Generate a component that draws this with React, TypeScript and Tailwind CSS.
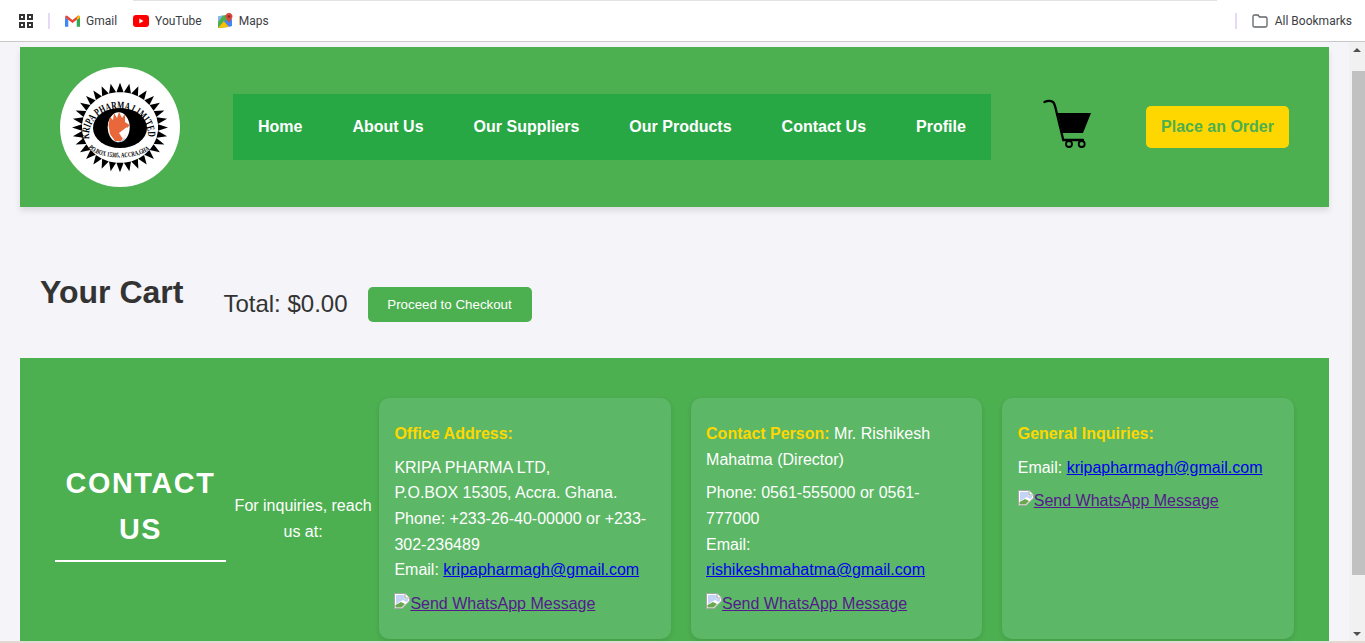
const spikes = Array.from({ length: 32 }, (_, i) => (i * 360) / 32);

function Logo() {
  return (
    <div className="w-[120px] h-[120px] rounded-full bg-white shrink-0 overflow-hidden">
      <svg viewBox="0 0 120 120" width="120" height="120">
        <g transform="translate(60 60.5) scale(1 0.93)">
          {spikes.map((a) => (
            <polygon key={a} points="-3.600,-38 0,-48 3.600,-38" fill="#000" transform={`rotate(${a})`} />
          ))}
        </g>
        <ellipse cx="60" cy="61" rx="27" ry="20" fill="#000" />
        <ellipse cx="58.700" cy="60.300" rx="11" ry="15" fill="#fff" />
        <path d="M48.500 58 L50 50 L53 53 L54 46 L57 51 L59 45 L62 51 L65 47 L65 55 L69.500 58 L66 63 L66 68 L61 74 L55 74 L50 67 Z" fill="#e8683c" />
        <path d="M59 66 L67 60 L69 64 L63 72 Z" fill="#fff" />
        <path d="M54 74 Q60 77 66 70 L64 73 Q58 77 54 74 Z" fill="#6d9bc8" />
        <defs>
          <path id="logo-top" d="M 29.350 72 A 29.500 26 0 1 1 87.650 72" />
          <path id="logo-bottom" d="M 27 78 A 33 14 0 0 0 90 82" />
        </defs>
        <text fontFamily="Liberation Serif, serif" fontSize="11" fontWeight="700" fill="#000">
          <textPath href="#logo-top" startOffset="0" textLength="93" lengthAdjust="spacingAndGlyphs">KRIPA PHARMA LIMITED</textPath>
        </text>
        <text fontFamily="Liberation Serif, serif" fontSize="7" fontWeight="700" fill="#000">
          <textPath href="#logo-bottom" startOffset="3" textLength="72" lengthAdjust="spacingAndGlyphs">P.O.BOX 15305, ACCRA,GHANA</textPath>
        </text>
      </svg>
    </div>
  );
}

function CartIcon() {
  return (
    <svg viewBox="0 0 50 50" width="50" height="50" className="shrink-0">
      <path d="M2.500 3 C5 1.800 9 1.800 11 3 C12.300 4 12.800 6 13.300 8 L21.300 41 L41 41" fill="none" stroke="#000" strokeWidth="2.300" strokeLinecap="round" />
      <path d="M15.700 14 L49 14 L41 34 L20.300 34 Z" fill="#000" />
      <circle cx="27" cy="45" r="3" fill="none" stroke="#000" strokeWidth="1.800" />
      <circle cx="39.700" cy="45" r="3" fill="none" stroke="#000" strokeWidth="1.800" />
    </svg>
  );
}

function GmailIcon() {
  return (
    <svg viewBox="0 0 16 12" width="15" height="12">
      <path d="M0 2 L0 12 L3.500 12 L3.500 4.500 Z" fill="#4285f4" />
      <path d="M16 2 L16 12 L12.500 12 L12.500 4.500 Z" fill="#34a853" />
      <path d="M0 2 Q0 0 2 0 L8 5 L14 0 Q16 0 16 2 L8 8 Z" fill="#ea4335" />
      <path d="M12.500 2.600 L14 0 Q16 0 16 2 L16 2.200 L12.500 4.800 Z" fill="#fbbc04" />
    </svg>
  );
}

function YoutubeIcon() {
  return (
    <svg viewBox="0 0 16 12" width="16" height="12">
      <rect width="16" height="12" rx="3" fill="#f00" />
      <path d="M6.300 3.500 L10.500 6 L6.300 8.500 Z" fill="#fff" />
    </svg>
  );
}

function MapsIcon() {
  return (
    <svg viewBox="0 0 15 15" width="15" height="15">
      <path d="M0 3.500 L10 1.500 L10 14 L0 15 Z" fill="#4caf50" />
      <path d="M0 15 L6 8 L11 14 Z" fill="#fbbc04" />
      <path d="M0 3.500 L5 2.500 L0 9 Z" fill="#8ab4f8" />
      <path d="M6 8 L11 14 L14 13 L14 6 Z" fill="#4285f4" />
      <path d="M11 0 C8.500 0 7.500 2 7.500 3.500 C7.500 5.500 10 7 11 10 C12 7 14.500 5.500 14.500 3.500 C14.500 2 13.500 0 11 0 Z" fill="#d9483b" />
      <circle cx="11" cy="3.500" r="1.300" fill="#8f2a20" />
    </svg>
  );
}

function BrokenImage() {
  return (
    <svg viewBox="0 0 16 16" width="16" height="16" className="inline-block align-baseline">
      <path d="M0.500 0.500 H11 L15.500 5 V8 L8 15.500 H0.500 Z" fill="#fff" stroke="#a6a6a6" />
      <path d="M2 2 H10.500 V6 H14 V8 L12 9 L9 7 L2 11 Z" fill="#c3d4f5" />
      <path d="M1.500 14.500 V12 L7 9 L11 11 L7.500 14.500 Z" fill="#6aa84f" />
      <path d="M11 0.500 V5 H15.500" fill="#fff" stroke="#a6a6a6" />
    </svg>
  );
}

function WhatsappLink() {
  return (
    <div className="mt-[8px]">
      <a href="#" className="text-[#551a8b] underline">
        <BrokenImage />
        Send WhatsApp Message
      </a>
    </div>
  );
}

function MailLink({ to }: { to: string }) {
  return (
    <a href="#" className="text-[#0000ee] underline">
      {to}
    </a>
  );
}

const navItems = ["Home", "About Us", "Our Suppliers", "Our Products", "Contact Us", "Profile"];

export default function App() {
  return (
    <div className="h-[643px] w-[1365px] overflow-hidden flex flex-col bg-[#f4f4f9] text-[#333] font-['Liberation_Sans',Arial,sans-serif]">
      {/* browser bookmarks bar */}
      <div className="relative h-[42px] shrink-0 bg-white border-b border-[#c8c8c8] flex items-center pl-[19px] pr-[13px] text-[12px] text-[#3c4043] font-['Roboto',sans-serif]">
        <div className="absolute top-0 left-[133px] w-[1084px] h-px bg-[#e3e3e3]" />
        <div className="grid grid-cols-2 gap-[2px] w-[14px] shrink-0">
          <span className="w-[6px] h-[6px] border-2 border-[#333]" />
          <span className="w-[6px] h-[6px] border-2 border-[#333]" />
          <span className="w-[6px] h-[6px] border-2 border-[#333]" />
          <span className="w-[6px] h-[6px] border-2 border-[#333]" />
        </div>
        <span className="ml-[15px] w-[2px] h-[16px] bg-[#e6d9f7]" />
        <div className="ml-[15px] flex items-center gap-[6px]"><GmailIcon /> Gmail</div>
        <div className="ml-[16px] flex items-center gap-[6px]"><YoutubeIcon /> YouTube</div>
        <div className="ml-[16px] flex items-center gap-[6px]"><MapsIcon /> Maps</div>
        <span className="ml-auto w-[2px] h-[16px] bg-[#e6d9f7]" />
        <svg viewBox="0 0 16 14" width="16" height="14" className="ml-[15px]">
          <path d="M1 2.500 Q1 1 2.500 1 H6 L7.500 3 H13.500 Q15 3 15 4.500 V11.500 Q15 13 13.500 13 H2.500 Q1 13 1 11.500 Z" fill="none" stroke="#5f6368" strokeWidth="1.300" />
        </svg>
        <span className="ml-[7px]">All Bookmarks</span>
      </div>

      <div className="flex flex-1 min-h-0">
        <main className="flex-1 min-w-0 px-5 pt-[5px] overflow-hidden">
          <header className="h-40 bg-[#4caf50] shadow-[0_4px_6px_rgba(0,0,0,0.1)] flex items-center pl-10">
            <Logo />
            <nav className="ml-[53px] w-[758px] h-[66px] bg-[#28a745] flex items-center gap-[50px] px-[25px] text-white font-bold">
              {navItems.map((item) => (
                <span key={item}>{item}</span>
              ))}
            </nav>
            <div className="ml-[51px] mb-[6px]">
              <CartIcon />
            </div>
            <button className="ml-[54px] w-[143px] h-[42px] rounded-[5px] bg-[#ffd700] text-[#4caf50] font-bold">
              Place an Order
            </button>
          </header>

          <section className="flex items-start h-[151px] pl-5 pt-[62px]">
            <h2 className="text-[32px] leading-[46px] font-bold text-[#333]">Your Cart</h2>
            <div className="ml-10 mt-[17px] text-[24px] leading-[35px]">Total: $0.00</div>
            <button className="ml-5 mt-[18px] w-[164px] h-[35px] rounded-[5px] bg-[#4caf50] text-white text-[13.333px]">
              Proceed to Checkout
            </button>
          </section>

          <footer className="bg-[#4caf50] flex items-start pt-10 px-[35px] h-[300px] text-white leading-[25.6px]">
            <div className="w-[171px] shrink-0 mt-[62px] border-b-2 border-white pb-[8px] text-center text-[28.8px] leading-[46px] font-bold tracking-[1.6px]">
              CONTACT US
            </div>
            <p className="w-[139px] ml-[7.6px] mr-[6.4px] mt-[95px] shrink-0 text-center">For inquiries, reach us at:</p>
            <div className="grid grid-cols-3 gap-5 flex-1 items-start">
              <div className="h-[241px] rounded-[10px] bg-[#5cb766] shadow-[0_2px_5px_rgba(0,0,0,0.1)] px-[15.4px] pt-[23.2px]">
                <div className="font-bold text-[#ffd700] mb-2">Office Address:</div>
                <div>
                  KRIPA PHARMA LTD,<br />
                  P.O.BOX 15305, Accra. Ghana.<br />
                  Phone: +233-26-40-00000 or +233-302-236489<br />
                  Email: <MailLink to="kripapharmagh@gmail.com" />
                </div>
                <WhatsappLink />
              </div>
              <div className="h-[241px] rounded-[10px] bg-[#5cb766] shadow-[0_2px_5px_rgba(0,0,0,0.1)] px-[15.4px] pt-[23.2px]">
                <div className="mb-2"><b className="text-[#ffd700]">Contact Person:</b> Mr. Rishikesh Mahatma (Director)</div>
                <div>
                  Phone: 0561-555000 or 0561-777000<br />
                  Email: <MailLink to="rishikeshmahatma@gmail.com" />
                </div>
                <WhatsappLink />
              </div>
              <div className="h-[241px] rounded-[10px] bg-[#5cb766] shadow-[0_2px_5px_rgba(0,0,0,0.1)] px-[15.4px] pt-[23.2px]">
                <div className="font-bold text-[#ffd700] mb-2">General Inquiries:</div>
                <div>Email: <MailLink to="kripapharmagh@gmail.com" /></div>
                <WhatsappLink />
              </div>
            </div>
          </footer>
        </main>

        {/* scrollbar */}
        <div className="w-4 shrink-0 bg-[#f1f1f1] flex flex-col items-center">
          <div className="h-[29px] w-full flex items-start justify-center pt-[6px]">
            <span className="w-0 h-0 border-x-[4px] border-x-transparent border-b-[4px] border-b-[#505050]" />
          </div>
          <div className="w-[13px] ml-[2px] h-[504px] bg-[#c1c1c1]" />
          <div className="mt-auto mb-[5px]">
            <span className="block w-0 h-0 border-x-[4px] border-x-transparent border-t-[4px] border-t-[#505050]" />
          </div>
        </div>
      </div>
      <div className="h-[2px] shrink-0 bg-[#e4d8d2]" />
    </div>
  );
}
